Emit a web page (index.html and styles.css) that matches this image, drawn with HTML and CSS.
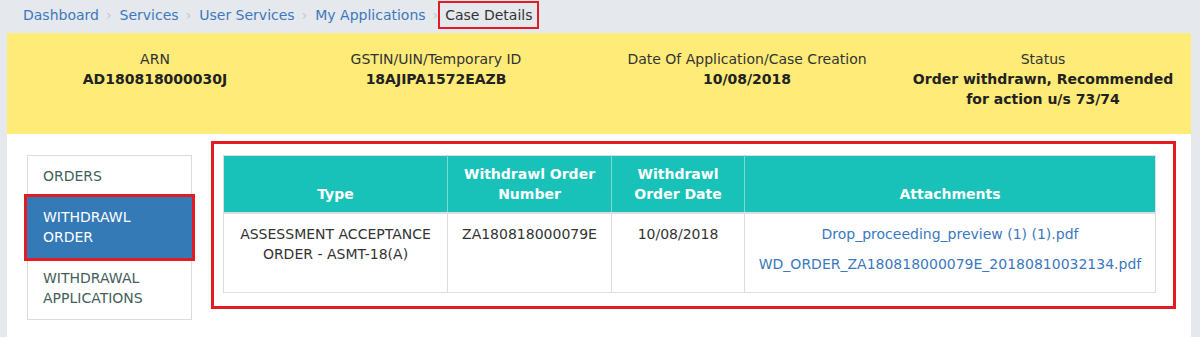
FILE: index.html
```html
<!DOCTYPE html>
<html lang="en">
<head>
<meta charset="utf-8">
<title>Case Details</title>
<link rel="stylesheet" href="styles.css">
</head>
<body>
<div class="page">
  <nav class="crumbs">
    <a class="crumb" href="#">Dashboard</a><span class="sep">›</span>
    <a class="crumb" href="#">Services</a><span class="sep">›</span>
    <a class="crumb" href="#">User Services</a><span class="sep">›</span>
    <a class="crumb" href="#">My Applications</a><span class="sep">›</span>
    <span class="crumb current">Case Details</span>
  </nav>

  <section class="summary">
    <div class="field">
      <div class="label">ARN</div>
      <div class="value">AD180818000030J</div>
    </div>
    <div class="field">
      <div class="label">GSTIN/UIN/Temporary ID</div>
      <div class="value">18AJIPA1572EAZB</div>
    </div>
    <div class="field">
      <div class="label">Date Of Application/Case Creation</div>
      <div class="value">10/08/2018</div>
    </div>
    <div class="field">
      <div class="label">Status</div>
      <div class="value">Order withdrawn, Recommended for action u/s 73/74</div>
    </div>
  </section>

  <section class="content">
    <ul class="tabs">
      <li class="tab">ORDERS</li>
      <li class="tab active">WITHDRAWL ORDER</li>
      <li class="tab">WITHDRAWAL APPLICATIONS</li>
    </ul>

    <div class="panel">
      <table class="grid">
        <colgroup>
          <col class="c1"><col class="c2"><col class="c3"><col class="c4">
        </colgroup>
        <thead>
          <tr>
            <th>Type</th>
            <th>Withdrawl Order Number</th>
            <th>Withdrawl Order Date</th>
            <th>Attachments</th>
          </tr>
        </thead>
        <tbody>
          <tr>
            <td>ASSESSMENT ACCEPTANCE ORDER - ASMT-18(A)</td>
            <td>ZA180818000079E</td>
            <td>10/08/2018</td>
            <td>
              <a class="file" href="#">Drop_proceeding_preview (1) (1).pdf</a>
              <a class="file" href="#">WD_ORDER_ZA180818000079E_20180810032134.pdf</a>
            </td>
          </tr>
        </tbody>
      </table>
    </div>
  </section>
</div>
</body>
</html>
```

FILE: styles.css
```css
* { box-sizing: border-box; }

html, body {
  margin: 0;
  padding: 0;
  background: #e5e8ec;
  font-family: "DejaVu Sans", Verdana, sans-serif;
  font-size: 14px;
  line-height: 20px;
  color: #333;
}

.page {
  width: 1184px;
  margin-left: 7px;
}

.crumbs {
  display: flex;
  align-items: center;
  height: 33px;
  padding: 0 0 3px 16px;
}

.crumb {
  color: #3c78c0;
  text-decoration: none;
}

.sep {
  color: #c4c8cc;
  font-size: 14px;
  padding: 0 8px 0 7px;
}

.current {
  color: #333;
  outline: 2px solid #e31b23;
  outline-offset: 0;
  padding: 2px 5px;
  margin-left: -6px;
}

.summary {
  display: grid;
  grid-template-columns: 260px 302px 320px 272px;
  background: #feeb78;
  height: 101px;
  padding: 16px 12px 0 18px;
  text-align: center;
}

.label { color: #333; }
.value { font-weight: bold; color: #222; }

.content {
  background: #fff;
  height: 203px;
  display: flex;
  align-items: flex-start;
  padding: 7px 15px 0 20px;
}

.tabs {
  list-style: none;
  margin: 14px 0 0 0;
  padding: 0;
  width: 165px;
  border: 1px solid #dcdcdc;
  flex: none;
}

.tab {
  padding: 10px 15px 11px 15px;
  color: #44605c;
}

.tab.active {
  background: #337ab7;
  color: #fff;
  outline: 3px solid #e31b23;
  position: relative;
  margin: 0 -1px;
  padding-left: 16px;
}

.panel {
  margin-left: 19px;
  width: 965px;
  height: 168px;
  border: 3px solid #e31b23;
  padding: 11px 18px 0 9px;
}

.grid {
  border-collapse: collapse;
  table-layout: fixed;
  width: 932px;
  border: 1px solid #dddddd;
}

.c1 { width: 224px; }
.c2 { width: 164px; }
.c3 { width: 133px; }
.c4 { width: 411px; }

.grid th {
  background: #19c2b8;
  color: #fff;
  font-weight: bold;
  vertical-align: bottom;
  text-align: center;
  padding: 8px 8px 8px 8px;
  height: 56px;
  border: 1px solid #7fd6cf;
  border-top-color: #dddddd;
  border-bottom: 2px solid #dddddd;
}

.grid th:first-child { border-left-color: #dddddd; }
.grid th:last-child { border-right-color: #dddddd; }

.grid td {
  vertical-align: top;
  text-align: center;
  padding: 10px 8px 8px 8px;
  border: 1px solid #dddddd;
  color: #333;
}

.file {
  display: block;
  color: #3c78c0;
  text-decoration: none;
  white-space: nowrap;
  margin-bottom: 10px;
}
```
